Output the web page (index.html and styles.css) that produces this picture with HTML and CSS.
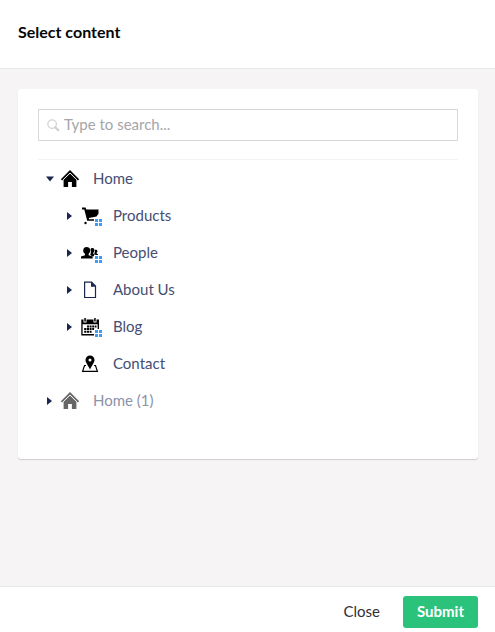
FILE: index.html
```html
<!DOCTYPE html>
<html lang="en">
<head>
<meta charset="utf-8">
<meta name="viewport" content="width=device-width, initial-scale=1">
<title>Select content</title>
<link rel="stylesheet" href="styles.css">
</head>
<body>
<div class="editor">
  <header class="editor-header">
    <h1 class="editor-title">Select content</h1>
  </header>
  <main class="editor-main">
    <section class="card">
      <div class="search">
        <svg class="search-icon" viewBox="0 0 14 14" aria-hidden="true"><circle cx="5.5" cy="5.5" r="4.6" fill="none" stroke="#d0d0d3" stroke-width="1.3"/><path d="M9 9l3.2 3" fill="none" stroke="#d0d0d3" stroke-width="2.4" stroke-linecap="round"/></svg>
        <input class="search-input" type="text" placeholder="Type to search..." aria-label="Type to search...">
      </div>
      <ul class="tree">
        <li>
          <div class="row">
            <button class="toggle" type="button" aria-label="Collapse Home" aria-expanded="true"><svg class="arrow" viewBox="0 0 10 10"><path d="M1 2.500h8L5 7.500z"/></svg></button>
            <a class="item" href="#"><span class="icon"><svg viewBox="0 0 20 20"><path d="M10 4.600L16.400 10.700v7.300h-4.500v-5H8.100v5H3.600v-7.300z"/><path d="M1.500 10.800L10 2.300l8.500 8.500" fill="none" stroke="currentColor" stroke-width="1.900"/><path d="M2.800 11.100L10 4l7.200 7.100" fill="none" stroke="#fff" stroke-width=".7"/></svg></span>Home</a>
          </div>
          <ul class="branch">
            <li class="row">
              <button class="toggle" type="button" aria-label="Expand Products" aria-expanded="false"><svg class="arrow" viewBox="0 0 10 10"><path d="M2 1v8l5-4z"/></svg></button>
              <a class="item" href="#"><span class="icon"><svg viewBox="0 0 20 20"><path d="M2 1.500h3.500l.9 2H18.500v4.200L16.500 10.500 8.800 12l.3 1.200H15v1.500H7.200L4.300 3.500H2z"/><circle cx="5.500" cy="17" r="1.200"/></svg><svg class="badge" viewBox="0 0 8 8"><path class="badge-back" d="M0 0h8v8H0z"/><path d="M1 1h3v3H1zM5 1h3v3H5zM1 5h3v3H1zM5 5h3v3H5z"/></svg></span>Products</a>
            </li>
            <li class="row">
              <button class="toggle" type="button" aria-label="Expand People" aria-expanded="false"><svg class="arrow" viewBox="0 0 10 10"><path d="M2 1v8l5-4z"/></svg></button>
              <a class="item" href="#"><span class="icon"><svg viewBox="0 0 20 20"><path d="M3.200 7.500C3.200 5 4.800 4 6.600 4s3.600 1 3.600 3.300c0 1.800-.7 2.700-1.500 3.500v1.400l4 1.300v2H1v-2l4-1.300v-1.400C3.800 10 3.200 9.200 3.200 7.500z"/><path d="M10.500 6.300c.3-.9 1-1.200 1.900-1.200 1.300 0 2 .9 2 2.200s-.5 2-1.100 2.600v1l2 .9v1.500h-3.300l-1.800-1.500c.8-1.500.8-3.500.3-5.500zM14.800 7c.6-.6 2.400-.5 2.600.8.1 1.200-.3 1.600-.8 2v.7l1.400.7v1h-2l-1.800-1.800c.6-.7.900-1.800.6-3.400z"/></svg><svg class="badge" viewBox="0 0 8 8"><path class="badge-back" d="M0 0h8v8H0z"/><path d="M1 1h3v3H1zM5 1h3v3H5zM1 5h3v3H1zM5 5h3v3H5z"/></svg></span>People</a>
            </li>
            <li class="row">
              <button class="toggle" type="button" aria-label="Expand About Us" aria-expanded="false"><svg class="arrow" viewBox="0 0 10 10"><path d="M2 1v8l5-4z"/></svg></button>
              <a class="item" href="#"><span class="icon icon-navy"><svg viewBox="0 0 20 20"><path d="M4.600 2.100h7l3.900 4v11.400H4.600z" fill="none" stroke="currentColor" stroke-width="1.200"/><path d="M11 1.800l5 5h-5z"/></svg></span>About Us</a>
            </li>
            <li class="row">
              <button class="toggle" type="button" aria-label="Expand Blog" aria-expanded="false"><svg class="arrow" viewBox="0 0 10 10"><path d="M2 1v8l5-4z"/></svg></button>
              <a class="item" href="#"><span class="icon"><svg viewBox="0 0 20 20"><path fill-rule="evenodd" d="M1.300 2.500h2.200v3h3v-3h7v3h3v-3H19v16H1.300zM2.600 7.300v9.700h15V7.300z"/><path d="M4.300 1h1.500v3.500H4.300zM14.200 1h1.500v3.500h-1.500z"/><path d="M7 8.500h2v2H7zM9.600 8.500h2v2h-2zM12.200 8.500h2v2h-2zM14.800 8.500h1.700v2h-1.700zM4.200 11.100h2.200v2H4.200zM7 11.100h2v2H7zM9.600 11.100h2v2h-2zM12.200 11.100h2v2h-2zM4.200 13.700h2.200v2H4.200zM7 13.700h2v2H7zM9.600 13.700h2v2h-2z"/></svg><svg class="badge" viewBox="0 0 8 8"><path class="badge-back" d="M0 0h8v8H0z"/><path d="M1 1h3v3H1zM5 1h3v3H5zM1 5h3v3H1zM5 5h3v3H5z"/></svg></span>Blog</a>
            </li>
            <li class="row">
              <span class="toggle"></span>
              <a class="item" href="#"><span class="icon"><svg viewBox="0 0 20 20"><path fill-rule="evenodd" d="M10 1.500a4.500 4.500 0 0 1 4.500 4.500c0 2.500-2.800 5.500-4.500 9.500-1.700-4-4.500-7-4.500-9.500A4.500 4.500 0 0 1 10 1.500zm0 3a1.500 1.500 0 1 0 0 3 1.500 1.500 0 0 0 0-3z"/><path d="M6 11.500H4.500L2.600 17.400h14.800l-1.900-5.900H14" fill="none" stroke="currentColor" stroke-width="1.200"/></svg></span>Contact</a>
            </li>
          </ul>
        </li>
        <li class="row row-muted">
          <button class="toggle" type="button" aria-label="Expand Home (1)" aria-expanded="false"><svg class="arrow" viewBox="0 0 10 10"><path d="M2 1v8l5-4z"/></svg></button>
          <a class="item" href="#"><span class="icon"><svg viewBox="0 0 20 20"><path d="M10 4.600L16.400 10.700v7.300h-4.500v-5H8.100v5H3.600v-7.300z"/><path d="M1.500 10.800L10 2.300l8.500 8.500" fill="none" stroke="currentColor" stroke-width="1.900"/><path d="M2.800 11.100L10 4l7.200 7.100" fill="none" stroke="#fff" stroke-width=".7"/></svg></span>Home (1)</a>
        </li>
      </ul>
    </section>
  </main>
  <footer class="editor-footer">
    <button class="button" type="button">Close</button>
    <button class="button button-primary" type="button">Submit</button>
  </footer>
</div>
</body>
</html>
```
FILE: styles.css
```css
* {
  box-sizing: border-box;
}

body {
  margin: 0;
  font-family: Lato, "Liberation Sans", sans-serif;
  font-size: 15px;
  line-height: 20px;
  color: #1b264f;
}

.editor {
  display: flex;
  flex-direction: column;
  min-height: 100vh;
  background: #f6f4f5;
}

.editor-header {
  padding: 22px 18px 26px;
  background: #fff;
  border-bottom: 1px solid #e9e9eb;
}

.editor-title {
  margin: 0;
  font-size: 16px;
  font-weight: 700;
  color: #060606;
}

.editor-main {
  flex: 1;
  padding: 20px 17px 20px 18px;
}

.card {
  padding: 20px 20px 40px;
  background: #fff;
  border-radius: 3px;
  box-shadow: 0 1px 1px rgba(0, 0, 0, 0.16);
}

.search {
  display: flex;
  align-items: center;
  gap: 4px;
  height: 32px;
  padding: 0 8px;
  border: 1px solid #d8d7d9;
}

.search-icon {
  width: 13px;
  height: 13px;
}

.search-input {
  flex: 1;
  min-width: 0;
  padding: 0 0 2px;
  border: 0;
  outline: 0;
  background: transparent;
  font: inherit;
  color: #303033;
}

.search-input::placeholder {
  color: #a5a5a8;
}

.tree,
.branch {
  margin: 0;
  padding: 0;
  list-style: none;
}

.tree {
  margin-top: 18px;
  border-top: 1px solid #f3f3f5;
}

.branch {
  padding-left: 20px;
}

.row {
  display: flex;
  align-items: center;
  height: 37px;
}

.toggle {
  display: flex;
  justify-content: flex-end;
  width: 17px;
  margin-right: 5px;
  padding: 0;
  border: 0;
  background: none;
  color: #1b264f;
}

.arrow {
  width: 10px;
  height: 10px;
  fill: currentColor;
}

.item {
  display: flex;
  align-items: flex-start;
  gap: 13px;
  line-height: 18px;
  color: #454e72;
  text-decoration: none;
}

.icon {
  position: relative;
  width: 20px;
  height: 20px;
  color: #000;
}

.icon svg {
  display: block;
  fill: currentColor;
}

.icon-navy {
  color: #1b264f;
}

.icon .badge {
  position: absolute;
  right: -2px;
  bottom: 0;
  width: 8px;
  height: 8px;
  fill: #3f9cf5;
}

.badge .badge-back {
  fill: #fff;
}

.row-muted .item {
  color: #8d92a7;
}

.row-muted .icon {
  color: #666;
}

.editor-footer {
  display: flex;
  justify-content: flex-end;
  gap: 9px;
  padding: 9px 17px 4px;
  background: #fff;
  border-top: 1px solid #e9e9eb;
}

.button {
  height: 32px;
  padding: 0 14px 2px;
  border: 0;
  border-radius: 3px;
  background: transparent;
  font: inherit;
  color: #303033;
}

.button-primary {
  background: #2bc37c;
  font-weight: 700;
  color: #fff;
}
```
